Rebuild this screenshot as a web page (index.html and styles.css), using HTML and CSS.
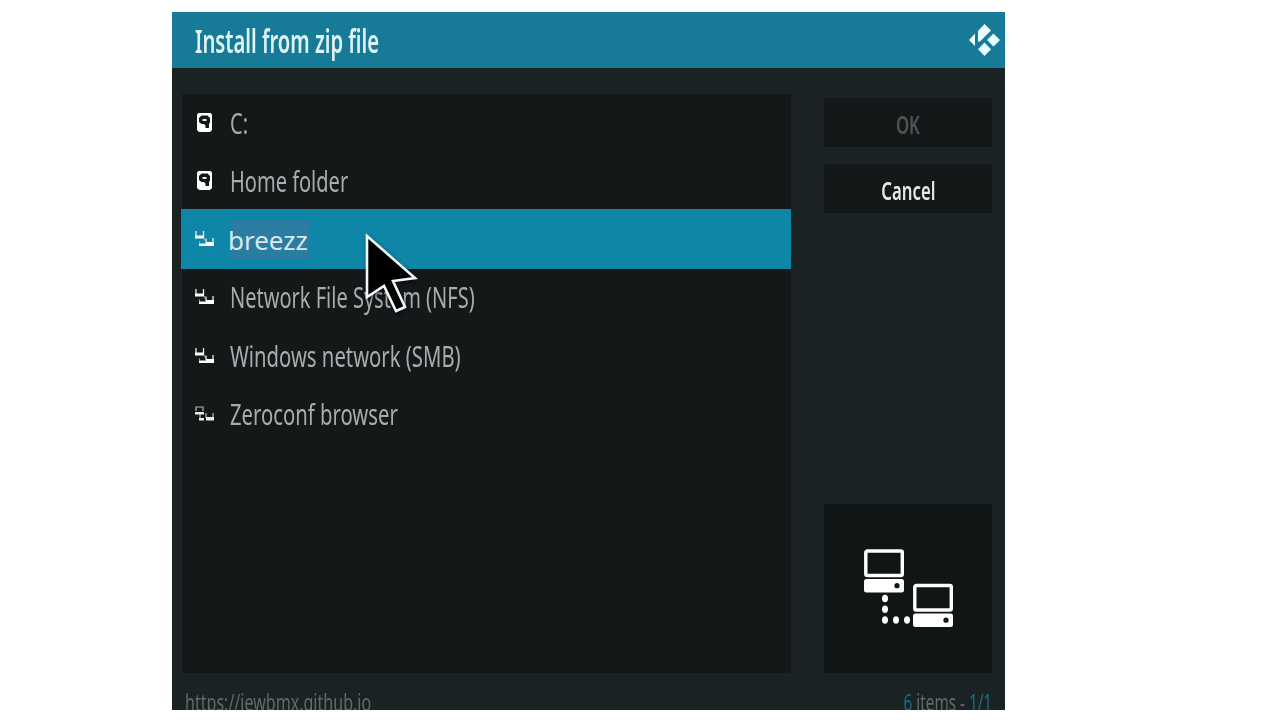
FILE: index.html
```
<!DOCTYPE html>
<html lang="en">
<head>
    <meta charset="UTF-8">
    <meta name="viewport" content="width=device-width, initial-scale=1.0">
    <title>Install from zip file</title>
    <link rel="stylesheet" href="styles.css">
</head>
<body>
    <!-- shared icons -->
    <svg class="defs" width="0" height="0">
        <symbol id="drive" viewBox="0 0 15 19">
            <path d="M1.500 0H13.500L15 1.500V17L13 19H2L0 17V1.500Z" fill="#fff"/>
            <path d="M4.500 2.500H10.500L13 5V9.500L12 11V15H8.500V12.500L7 11H4.500L2 9V5Z" fill="#141819"/>
            <path d="M5.500 6H9.500V8H5.500Z" fill="#e8eaea"/>
        </symbol>
        <symbol id="network" viewBox="0 0 19 16">
            <path d="M1 0V6M8.500 0V6M11 7.500V12M18 7V13" stroke="#e8eeee" stroke-width="1.300"/>
            <path d="M0 4.500H9V7.500H0ZM11 11H19V15H11ZM4 12.500H11V15H4Z" fill="#fff"/>
            <path d="M4.500 10.500V13M9 7L11 11" stroke="#a9b3b4" stroke-width="1"/>
        </symbol>
        <symbol id="zeroconf" viewBox="0 0 19 16">
            <path d="M1 5V1H8V5M11 7V12M18 7V13M5 8V14" fill="none" stroke="#b4bbbc" stroke-width="1.200"/>
            <path d="M0 6H9V8.500H0ZM11 11H19V14.500H11ZM4 12H9V14.500H4Z" fill="#e8eeee"/>
        </symbol>
    </svg>

    <div class="dialog">
        <div class="header">
            <h1><span>Install from zip file</span></h1>
            <svg class="logo" viewBox="0 0 31 32">
                <path d="M15.500 0L22 6.500L11 17.500H9V7ZM24.500 9.500L31 16L24.500 22.500L18 16ZM15.500 18.500L22 25.200L15.500 32L9 25.200ZM6 9.500V22L0 16Z" fill="#e9ffff"/>
            </svg>
        </div>

        <div class="content">
            <ul class="list">
                <li><svg class="drive"><use href="#drive"/></svg><span class="label">C:</span></li>
                <li><svg class="drive"><use href="#drive"/></svg><span class="label">Home folder</span></li>
                <li class="selected"><svg class="net"><use href="#network"/></svg><span class="source">breezz</span></li>
                <li><svg class="net"><use href="#network"/></svg><span class="label">Network File System (NFS)</span></li>
                <li><svg class="net"><use href="#network"/></svg><span class="label wide">Windows network (SMB)</span></li>
                <li><svg class="net"><use href="#zeroconf"/></svg><span class="label wide">Zeroconf browser</span></li>
            </ul>

            <div class="sidebar">
                <button class="btn btn-disabled"><span>OK</span></button>
                <button class="btn"><span>Cancel</span></button>
                <div class="preview">
                    <svg width="90" height="80" viewBox="0 0 90 80">
                        <g id="pc">
                            <rect x="1.800" y="2" width="36.500" height="24.500" rx="1.500" fill="none" stroke="#fff" stroke-width="3.400"/>
                            <rect x="0" y="30" width="40" height="13.500" rx="2.500" fill="#fff"/>
                            <circle cx="33" cy="36.700" r="2.600" fill="#141819"/>
                        </g>
                        <use href="#pc" x="49" y="34.500"/>
                        <g fill="#fff">
                            <ellipse cx="21" cy="49.500" rx="3" ry="3.700"/>
                            <ellipse cx="21" cy="60.300" rx="3" ry="3.700"/>
                            <ellipse cx="21" cy="71" rx="3" ry="3.700"/>
                            <ellipse cx="32" cy="71" rx="3" ry="3.700"/>
                            <ellipse cx="43" cy="71" rx="3" ry="3.700"/>
                        </g>
                    </svg>
                </div>
            </div>
        </div>

        <div class="footer">
            <span class="url">https://jewbmx.github.io</span>
            <span class="count"><b>6</b> items - <b>1/1</b></span>
        </div>

        <svg class="cursor" viewBox="0 0 56 84">
            <path d="M4 4L52 46L30 49L42 75L33 79L21 54L4 65Z" fill="#000" stroke="#eef8fa" stroke-width="2.600"/>
        </svg>
    </div>
</body>
</html>
```
FILE: styles.css
```
* { margin: 0; padding: 0; box-sizing: border-box; }
body {
    font-family: "Noto Sans", "Open Sans", sans-serif;
    background: #fff; padding: 12px 0 0 172px; overflow: hidden;
}
.defs { position: absolute; }
.dialog {
    position: relative; width: 833px; height: 698px;
    display: flex; flex-direction: column;
    background: #1b2224; overflow: hidden;
}

/* header */
.header {
    height: 56px; flex: none; padding: 0 5px 0 23px;
    display: flex; align-items: center; justify-content: space-between;
    background: #177a96;
}
.header h1 { font-size: 32px; font-weight: 600; line-height: 56px; padding-top: 2px; color: #dff3f8; white-space: nowrap; }
.header h1 span { display: inline-block; transform: scaleX(0.631); transform-origin: left; }
.logo { width: 31px; height: 32px; }

.content { display: flex; padding: 26px 13px 0 10px; flex: none; height: 605px; }

/* file list */
.list {
    width: 609px; height: 579px; list-style: none;
    background: #141819; flex: none;
}
.list li {
    height: 58.2px; padding-left: 13px;
    display: flex; align-items: center;
    font-size: 29px; color: #a9acad; white-space: nowrap;
}
.list li.selected {
    height: 60px; margin: -1px 0 -1px -1px; padding-left: 14px;
    background: #0f86a7;
}
.drive { width: 15px; height: 19px; margin: -2px 18px 0 2px; }
.net { width: 19px; height: 16px; margin-right: 16px; }
.label { margin-top: -1px; transform: scaleX(0.69); transform-origin: left; }
.label.wide { transform: scaleX(0.699); }
.source {
    font-size: 26px; line-height: 40px; color: #d9e8ef; margin: 2px 0 0 -3px;
    background: linear-gradient(to right, transparent 4px, #2a7da0 4px);
    padding: 0 1px;
}

/* buttons and preview */
.sidebar { width: 168px; margin: 4px 0 0 auto; display: flex; flex-direction: column; }
.btn {
    height: 49px; margin-bottom: 17px; padding-top: 3px; border: none;
    background: #141819; color: #e6e8e8;
    font-family: inherit; font-size: 25px; font-weight: 600;
}
.btn span { display: inline-block; transform: scaleX(0.67); }
.btn-disabled { color: #505455; }
.preview {
    height: 170px; margin-top: 274px; padding: 2px 0 0 1px;
    display: flex; align-items: center; justify-content: center;
    background: #101516;
}

/* footer, its lower part runs off the dialog */
.footer {
    display: flex; justify-content: space-between;
    padding: 12px 13px 0 13px; font-size: 23px; line-height: 34px;
    color: #636869; white-space: nowrap;
}
.url { transform: scaleX(0.698); transform-origin: left; }
.count { transform: scaleX(0.665); transform-origin: right; }
.count b { font-weight: 400; color: #176f88; }

.cursor { position: absolute; left: 191px; top: 220px; width: 56px; height: 84px; filter: drop-shadow(1px 2px 2px rgba(0,0,0,0.5)); }
```
